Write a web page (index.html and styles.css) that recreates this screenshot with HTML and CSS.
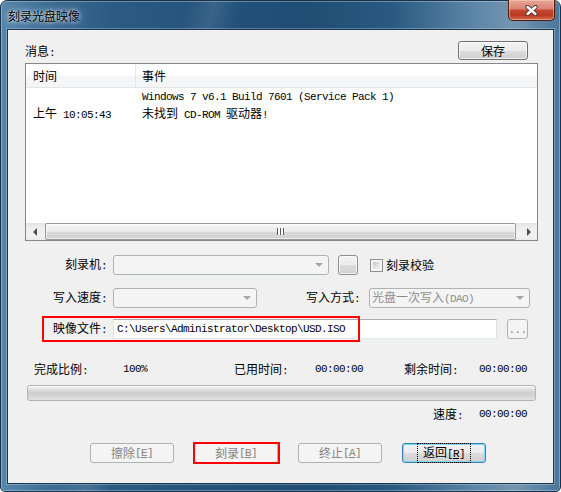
FILE: index.html
```html
<!DOCTYPE html>
<html lang="zh-CN">
<head>
    <meta charset="UTF-8">
    <title>刻录光盘映像</title>
    <link rel="stylesheet" href="styles.css">
</head>
<body>
    <div class="window">
        <div class="titlebar">
            <span class="title">刻录光盘映像</span>
            <div class="close-btn">
                <svg width="13" height="11" viewBox="0 0 13 11">
                    <path d="M2.5 2 L10.5 9 M10.5 2 L2.5 9" stroke="#4a2e2a" stroke-width="4.2" stroke-linecap="round"/>
                    <path d="M2.5 2 L10.5 9 M10.5 2 L2.5 9" stroke="#ffffff" stroke-width="2.4" stroke-linecap="round"/>
                </svg>
            </div>
        </div>

        <div class="client">
            <div class="msg-head">
                <span class="msg-label">消息<span class="m">:</span></span>
                <button class="btn save-btn">保存</button>
            </div>

            <div class="list">
                <div class="list-head">
                    <div class="col-time">时间</div>
                    <div class="col-event">事件</div>
                </div>
                <div class="list-body">
                    <div class="list-row">
                        <div class="col-time"></div>
                        <div class="col-event m">Windows 7 v6.1 Build 7601 (Service Pack 1)</div>
                    </div>
                    <div class="list-row">
                        <div class="col-time">上午<span class="m"> 10:05:43</span></div>
                        <div class="col-event">未找到<span class="m"> CD-ROM </span>驱动器<span class="m">!</span></div>
                    </div>
                </div>
                <div class="hscroll">
                    <div class="sb-arrow"><span class="tri-left"></span></div>
                    <div class="sb-track">
                        <div class="sb-thumb"><span class="grip"></span></div>
                    </div>
                    <div class="sb-arrow"><span class="tri-right"></span></div>
                </div>
            </div>

            <div class="form">
                <div class="row">
                    <span class="label">刻录机<span class="m">:</span></span>
                    <div class="combo combo-drive"><span class="combo-arrow"></span></div>
                    <button class="btn square-btn"></button>
                    <span class="checkbox"><span class="check-inner"></span></span>
                    <span class="check-label">刻录校验</span>
                </div>
                <div class="row row-speed">
                    <span class="label">写入速度<span class="m">:</span></span>
                    <div class="combo combo-speed"><span class="combo-arrow"></span></div>
                    <span class="label-mode">写入方式<span class="m">:</span></span>
                    <div class="combo combo-mode"><span class="combo-text">光盘一次写入<span class="m">(DAO)</span></span><span class="combo-arrow"></span></div>
                </div>
                <div class="row row-file">
                    <span class="label">映像文件<span class="m">:</span></span>
                    <div class="textbox m">C:\Users\Administrator\Desktop\USD.ISO</div>
                    <button class="btn browse-btn" disabled><span class="m">...</span></button>
                    <div class="mark mark-file"></div>
                </div>
            </div>

            <div class="stats">
                <span>完成比例<span class="m">:</span></span>
                <span class="m">100%</span>
                <span>已用时间<span class="m">:</span></span>
                <span class="m">00:00:00</span>
                <span>剩余时间<span class="m">:</span></span>
                <span class="m">00:00:00</span>
            </div>
            <div class="progress"></div>
            <div class="stats speed">
                <span></span><span></span><span></span><span></span>
                <span class="speed-label">速度<span class="m">:</span></span>
                <span class="m">00:00:00</span>
            </div>

            <div class="actions">
                <button class="btn" disabled>擦除<span class="m">[<u>E</u>]</span></button>
                <div class="mark-wrap">
                    <button class="btn" disabled>刻录<span class="m">[<u>B</u>]</span></button>
                    <div class="mark mark-burn"></div>
                </div>
                <button class="btn" disabled>终止<span class="m">[<u>A</u>]</span></button>
                <button class="btn default-btn"><span class="focus">返回<span class="m">[<u>R</u>]</span></span></button>
            </div>
        </div>
    </div>
</body>
</html>
```

FILE: styles.css
```css
body {
    margin: 0;
    background: #ffffff;
    font-family: "Noto Sans CJK SC", sans-serif;
    font-size: 12px;
    color: #000;
}

.m {
    font-family: "Liberation Mono", monospace;
    font-size: 11px;
    letter-spacing: -0.6px;
    white-space: pre;
}

u {
    text-decoration: underline;
}

/* window frame */
.window {
    width: 561px;
    height: 492px;
    box-sizing: border-box;
    border: 1px solid #17324a;
    border-radius: 7px 7px 5px 5px;
    padding: 0 6px 7px 6px;
    display: flex;
    flex-direction: column;
    background:
        linear-gradient(105deg, rgba(255, 255, 255, 0) 27%, rgba(255, 255, 255, 0.1) 31%, rgba(255, 255, 255, 0) 35%),
        linear-gradient(to right, #5887ad 0%, #3f6e95 8%, #2b5b82 20%, #23517a 40%, #1f4d74 55%, #2a5a81 70%, #5a84a6 84%, #7596b0 92%, #4a769b 100%);
    box-shadow: inset 0 0 0 1px rgba(255, 255, 255, 0.3);
}

.titlebar {
    height: 28px;
    display: flex;
    justify-content: space-between;
    align-items: flex-start;
}

.title {
    margin: 6px 0 0 1px;
    line-height: 17px;
    color: #000;
    text-shadow: 0 0 6px rgba(255, 255, 255, 0.9), 0 0 3px rgba(255, 255, 255, 0.8);
}

.close-btn {
    width: 47px;
    height: 21px;
    box-sizing: border-box;
    margin: -1px -1px 0 0;
    border: 1px solid #4b1a12;
    border-top: none;
    border-radius: 0 0 5px 5px;
    background: linear-gradient(#e7a898 0%, #d98170 45%, #c44a31 50%, #b93a22 75%, #d5684a 100%);
    box-shadow: inset 0 0 0 1px rgba(255, 220, 200, 0.45);
    display: flex;
    align-items: center;
    justify-content: center;
}

.client {
    height: 455px;
    box-sizing: border-box;
    border: 1px solid #1b364e;
    background: #f0f0f0;
    box-shadow: 0 0 0 1px rgba(255, 255, 255, 0.25);
    display: flex;
    flex-direction: column;
}

/* messages */
.msg-head {
    margin-top: 11px;
    height: 19px;
    padding: 0 25px 0 17px;
    display: flex;
    justify-content: space-between;
    align-items: center;
}

.msg-label {
    padding-top: 3px;
    line-height: 16px;
}

.btn {
    box-sizing: border-box;
    border: 1px solid #707070;
    border-radius: 3px;
    background: linear-gradient(#f2f2f2 0%, #ebebeb 50%, #dddddd 51%, #cfcfcf 100%);
    box-shadow: inset 0 0 0 1px rgba(255, 255, 255, 0.7);
    font-family: "Noto Sans CJK SC", sans-serif;
    font-size: 12px;
    line-height: 16px;
    color: #000;
    padding: 0;
    display: flex;
    align-items: center;
    justify-content: center;
}

.btn:disabled {
    border-color: #adb2b5;
    background: #f4f4f4;
    box-shadow: none;
    color: #838383;
}

.save-btn {
    width: 70px;
    height: 19px;
}

.list {
    margin: 3px 0 0 17px;
    width: 513px;
    height: 178px;
    box-sizing: border-box;
    border: 1px solid #828790;
    background: #fff;
    display: flex;
    flex-direction: column;
}

.list-head {
    height: 24px;
    box-sizing: border-box;
    border-bottom: 1px solid #e5e5e5;
    background: linear-gradient(#ffffff 0%, #ffffff 45%, #f5f6f7 55%, #f5f6f7 100%);
    display: flex;
    align-items: center;
}

.list-head .col-time {
    align-self: stretch;
    display: flex;
    align-items: center;
    border-right: 1px solid #e5e5e5;
}

.col-time {
    width: 110px;
    box-sizing: border-box;
    padding-left: 7px;
    white-space: nowrap;
}

.col-event {
    padding-left: 6px;
    white-space: nowrap;
}

.list-body {
    flex: 1;
}

.list-row {
    display: flex;
    height: 16px;
    line-height: 16px;
}

.list-row:first-child {
    margin-top: 1px;
}

/* horizontal scroll bar */
.hscroll {
    height: 17px;
    display: flex;
    background: linear-gradient(#e3e3e3 0%, #eeeeee 25%, #f2f2f2 75%, #e9e9e9 100%);
}

.sb-arrow {
    width: 17px;
    display: flex;
    align-items: center;
    justify-content: center;
}

.tri-left {
    width: 0;
    height: 0;
    border-top: 4px solid transparent;
    border-bottom: 4px solid transparent;
    border-right: 4px solid #4d4d4d;
}

.tri-right {
    width: 0;
    height: 0;
    border-top: 4px solid transparent;
    border-bottom: 4px solid transparent;
    border-left: 4px solid #4d4d4d;
}

.sb-track {
    flex: 1;
    padding: 0 4px 0 2px;
    display: flex;
}

.sb-thumb {
    flex: 1;
    box-sizing: border-box;
    border: 1px solid #979797;
    border-radius: 2px;
    background: linear-gradient(#f4f4f4 0%, #e9e9e9 50%, #d9d9d9 51%, #d0d0d0 100%);
    box-shadow: inset 0 0 0 1px rgba(255, 255, 255, 0.6);
    display: flex;
    align-items: center;
    justify-content: center;
}

.grip {
    width: 7px;
    height: 7px;
    background: repeating-linear-gradient(to right, #5a5a5a 0, #5a5a5a 1px, #ffffff 1px, #ffffff 3px);
}

/* form */
.form {
    margin-top: 14px;
}

.row {
    height: 20px;
    display: flex;
    align-items: center;
    position: relative;
    white-space: nowrap;
}

.row-speed {
    margin-top: 13px;
}

.row-file {
    margin-top: 11px;
}

.label {
    width: 99px;
    margin-right: 6px;
    text-align: right;
    line-height: 16px;
}

.combo {
    height: 20px;
    box-sizing: border-box;
    border: 1px solid #adb2b5;
    border-radius: 3px;
    background: #f4f4f4;
    display: flex;
    align-items: center;
    padding: 0 5px 0 2px;
}

.combo-arrow {
    margin-left: auto;
    width: 0;
    height: 0;
    border-left: 4px solid transparent;
    border-right: 4px solid transparent;
    border-top: 4px solid #a7a7a7;
}

.combo-drive {
    width: 216px;
}

.combo-speed {
    width: 144px;
}

.combo-mode {
    width: 161px;
}

.combo-text {
    color: #8d8d8d;
    line-height: 16px;
}

.square-btn {
    width: 20px;
    height: 20px;
    margin-left: 9px;
    border-color: #8f8f8f;
}

.checkbox {
    width: 13px;
    height: 13px;
    margin-left: 12px;
    box-sizing: border-box;
    border: 1px solid #8f8f8f;
    background: #f4f4f4;
    padding: 2px;
}

.check-inner {
    display: block;
    width: 100%;
    height: 100%;
    background: linear-gradient(135deg, #c8c8c8 0%, #e4e4e4 60%, #f4f4f4 100%);
}

.check-label {
    margin-left: 3px;
    line-height: 16px;
}

.label-mode {
    margin-left: 47px;
    width: 56px;
    margin-right: 9px;
    line-height: 16px;
    text-align: right;
}

.textbox {
    width: 384px;
    height: 20px;
    box-sizing: border-box;
    border: 1px solid #abadb3;
    border-color: #abadb3 #dbdfe6 #e3e9ef #e2e3ea;
    background: #fff;
    padding-left: 3px;
    line-height: 18px;
}

.browse-btn {
    width: 21px;
    height: 20px;
    margin-left: 10px;
    align-items: flex-end;
}

.mark {
    position: absolute;
    box-sizing: border-box;
    border: 2px solid #ff0000;
    pointer-events: none;
}

.mark-file {
    left: 34px;
    top: -3px;
    width: 318px;
    height: 26px;
}

/* progress */
.stats {
    margin-top: 22px;
    padding-left: 26px;
    display: grid;
    grid-template-columns: 89px 111px 81px 89px 75px auto;
    line-height: 16px;
    white-space: nowrap;
}

.stats.speed {
    margin-top: 5px;
}

.speed-label {
    padding-left: 29px;
}

.progress {
    margin: 6px 0 0 19px;
    width: 509px;
    height: 16px;
    box-sizing: border-box;
    border: 1px solid #b2b2b2;
    border-radius: 3px;
    background: linear-gradient(#f3f3f3 0%, #e0e0e0 25%, #cdcdcd 50%, #d6d6d6 75%, #e4e4e4 100%);
    box-shadow: inset 0 1px 0 #fafafa;
}

/* bottom buttons */
.actions {
    margin-top: 19px;
    padding-left: 82px;
    display: flex;
    gap: 20px;
}

.actions .btn {
    width: 84px;
    height: 20px;
}

.mark-wrap {
    position: relative;
}

.mark-burn {
    top: -1px;
    left: -1px;
    right: -2px;
    bottom: -1px;
}

.default-btn {
    border-color: #3c7fb1;
    box-shadow: inset 0 0 0 1px #7ed6f8;
}

.focus {
    padding: 0 4px;
    outline: 1px dotted #000;
    outline-offset: 1px;
    line-height: 13px;
}
```
